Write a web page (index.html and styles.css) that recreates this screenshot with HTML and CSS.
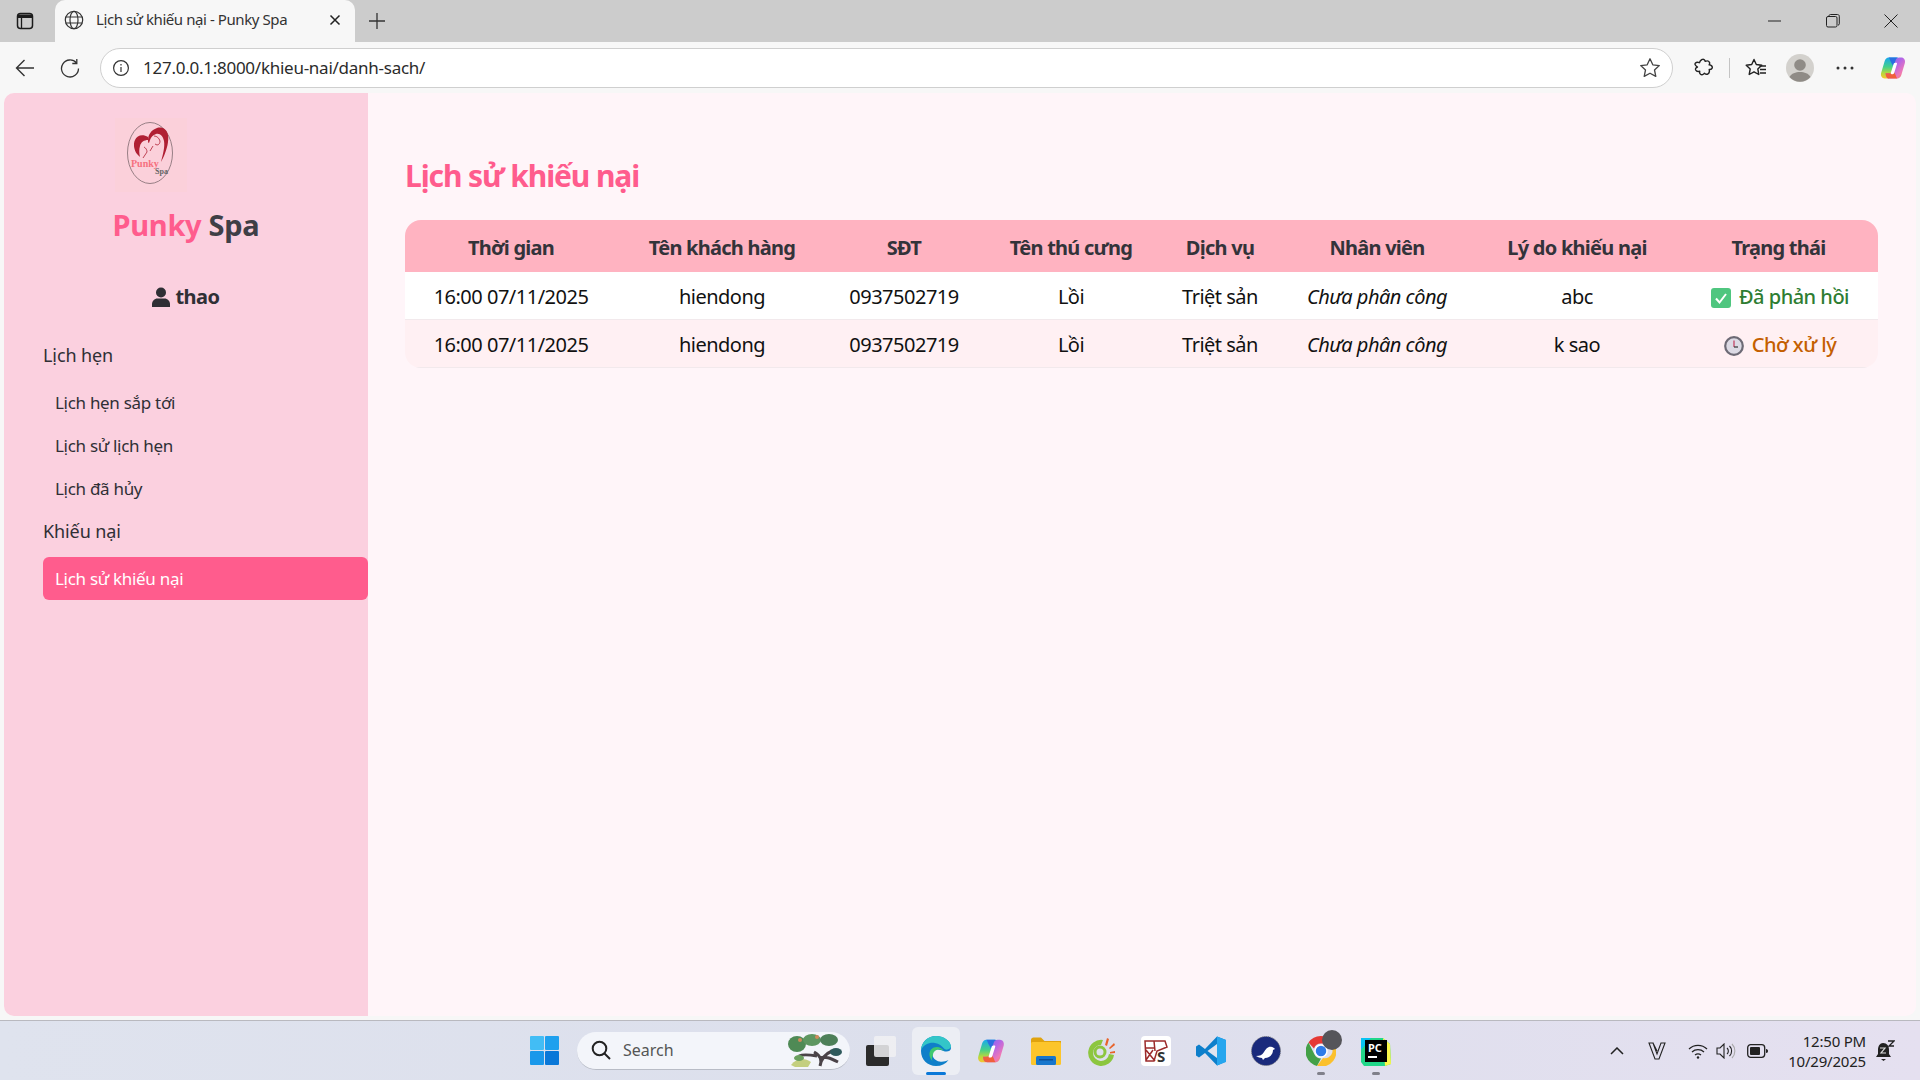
FILE: index.html
```html
<!DOCTYPE html>
<html lang="vi">
<head>
<meta charset="utf-8">
<title>Lịch sử khiếu nại - Punky Spa</title>
<link rel="stylesheet" href="styles.css">
</head>
<body>
<svg class="defs" width="0" height="0" aria-hidden="true">
  <defs>
    <linearGradient id="cpA" x1="0" y1="0" x2="0" y2="1"><stop offset="0" stop-color="#18a8ee"/><stop offset=".45" stop-color="#45d08a"/><stop offset=".75" stop-color="#b8d83c"/><stop offset="1" stop-color="#f8c62e"/></linearGradient>
    <linearGradient id="cpB" x1="0" y1="0" x2="1" y2="1"><stop offset="0" stop-color="#5a78ee"/><stop offset=".45" stop-color="#b565e6"/><stop offset=".75" stop-color="#ee79b8"/><stop offset="1" stop-color="#f6824a"/></linearGradient>
    <symbol id="copilot" viewBox="0 0 32 32">
      <path d="M11 4h9c2 0 3.500 1.200 4 3l.5 3h-4c-2 0-3 1-3.500 3l-3.500 12c-.7 2-2.200 3-4 3H6.500C3.500 28 1.500 25 2.500 21.500L6.500 8C7.300 5.500 9 4 11 4z" fill="url(#cpA)"/>
      <path d="M11 4h9c2 0 3.500 1.200 4 3l.5 3h-4c-2 0-3 1-3.500 3l-.5 1.500L13 8c-.5-1.500-1-3-2-4z" fill="#2a6fe0"/>
      <path d="M21 28h-9c-2 0-3.500-1.200-4-3l-.5-3h4c2 0 3-1 3.500-3L19 7c.7-2 2.200-3 4-3h2.500c3 0 5 3 4 6.500L25.500 24c-.8 2.500-2.500 4-4.500 4z" fill="url(#cpB)"/>
      <path d="M21 28h-9c-2 0-3.500-1.200-4-3l-.5-3h4c2 0 3-1 3.500-3l.5-1.500L19 24c.5 1.500 1 3 2 4z" fill="#f0603c"/>
      <path d="M19.500 10h-1c-1 0-1.700.8-2 2l-3 9.500c-.3 1 .2 1.500 1 1.500h1c1 0 1.700-.8 2-2l3-9.500c.3-1-.2-1.500-1-1.500z" fill="#fff"/>
    </symbol>
  </defs>
</svg>

<header class="tabstrip">
  <svg class="sb-toggle" viewBox="0 0 18 18" width="18" height="18"><rect x="1.500" y="1.500" width="15" height="15" rx="3" fill="none" stroke="#1c1c1c" stroke-width="1.500"/><path d="M2 2.500h14V6H2z" fill="#1c1c1c"/><path d="M5.500 6v10" stroke="#1c1c1c" stroke-width="1.300"/></svg>
  <div class="tab">
    <svg class="tab-globe" viewBox="0 0 20 20" width="20" height="20" fill="none" stroke="#333" stroke-width="1.200"><circle cx="10" cy="10" r="8.700"/><ellipse cx="10" cy="10" rx="4" ry="8.700"/><path d="M1.800 7h16.400M1.800 13h16.400"/></svg>
    <span class="tab-title">Lịch sử khiếu nại - Punky Spa</span>
    <svg class="tab-x" viewBox="0 0 12 12" width="12" height="12"><path d="M1.500 1.500l9 9M10.500 1.500l-9 9" stroke="#222" stroke-width="1.500"/></svg>
  </div>
  <svg class="tab-plus" viewBox="0 0 18 18" width="18" height="18"><path d="M9 1v16M1 9h16" stroke="#333" stroke-width="1.300"/></svg>
  <div class="win-ctrl">
    <svg viewBox="0 0 14 14" width="14" height="14"><path d="M0 7h13" stroke="#222" stroke-width="1"/></svg>
    <svg viewBox="0 0 14 14" width="14" height="14" fill="none" stroke="#222" stroke-width="1"><rect x=".5" y="2.500" width="10.500" height="10.500" rx="1.500"/><path d="M3 2.500V2c0-1 .6-1.500 1.500-1.500h7c1 0 1.800.7 1.800 1.800v7.500c0 .8-.5 1.300-1.300 1.400"/></svg>
    <svg viewBox="0 0 14 14" width="14" height="14"><path d="M.5.500l13 13M13.500.500l-13 13" stroke="#222" stroke-width="1"/></svg>
  </div>
</header>

<div class="toolbar">
  <svg class="tb-back" viewBox="0 0 20 20" width="20" height="20" fill="none" stroke="#333" stroke-width="1.400"><path d="M19 10H1.500M9.500 2L1.500 10l8 8"/></svg>
  <svg class="tb-reload" viewBox="0 0 20 20" width="20" height="20" fill="none" stroke="#333" stroke-width="1.300"><path d="M16.500 5A8.500 8.500 0 1 0 18.500 10.500"/><path d="M16.800 1v4.500h-4.500"/></svg>
  <div class="address">
    <svg class="info" viewBox="0 0 18 18" width="18" height="18" fill="none" stroke="#333" stroke-width="1.200"><circle cx="9" cy="9" r="7.400"/><path d="M9 8v5M9 5v1.400"/></svg>
    <span class="url">127.0.0.1:8000/khieu-nai/danh-sach/</span>
    <svg class="star" viewBox="0 0 22 22" width="22" height="22" fill="none" stroke="#444" stroke-width="1.300" stroke-linejoin="round"><path d="M11 1.800l2.800 6 6.500.8-4.800 4.400 1.300 6.400-5.800-3.200-5.800 3.200 1.300-6.400L1.700 8.600l6.500-.8z"/></svg>
  </div>
  <div class="tb-right">
    <svg class="tb-ext" viewBox="0 0 20 20" width="20" height="20" fill="none" stroke="#222" stroke-width="1.400" stroke-linejoin="round"><path d="M8 1.500c1.500-.8 3 .3 3.200 1.800 1.600-.6 3.600-.3 4.300 1 .5 1-.2 2-.3 2.500 2 .3 3.500 1.500 3 3.200-.4 1.400-1.800 1.600-3 1.500.4 1.600.2 3.500-1.200 4.400-1.300.8-2.500.3-3.500-.7-1 1.400-2.700 2.100-4 1.100-1-.7-1-2-.8-3-1.500.4-3.400 0-4-1.300-.6-1.400.5-2.500 1.800-3C1 7.500.5 6 1.500 5c1-1 2.800-.8 4-.3.300-1.200 1.300-2.600 2.500-3.200z"/></svg>
    <span class="tb-div"></span>
    <svg class="tb-fav" viewBox="0 0 22 20" width="22" height="20" fill="none" stroke="#222" stroke-width="1.400" stroke-linejoin="round"><path d="M9 1.500l2.300 5 5.500.7-4 3.800 1 5.500L9 13.800l-4.800 2.700 1-5.500-4-3.800 5.500-.7z"/><path d="M14.500 8H21M15 11.500h6M15 15h6"/></svg>
    <svg class="tb-avatar" viewBox="0 0 28 28" width="28" height="28"><circle cx="14" cy="14" r="14" fill="#d3d1cd"/><circle cx="14" cy="11" r="5.800" fill="#8f8b86"/><path d="M3.500 23c2-3.600 6-5 10.500-5s8.500 1.400 10.500 5A14 14 0 0 1 3.500 23z" fill="#8f8b86"/></svg>
    <svg class="tb-dots" viewBox="0 0 18 4" width="18" height="4" fill="#333"><circle cx="2" cy="2" r="1.500"/><circle cx="9" cy="2" r="1.500"/><circle cx="16" cy="2" r="1.500"/></svg>
    <svg class="tb-copilot" width="28" height="28"><use href="#copilot"/></svg>
  </div>
</div>

<div class="window">
  <aside class="sidebar">
    <div class="logo">
      <svg viewBox="0 0 72 74" width="72" height="74">
        <rect width="72" height="74" fill="#fbd0da"/>
        <ellipse cx="35" cy="35" rx="22.500" ry="30.500" fill="none" stroke="#7d6a6f" stroke-width=".8"/>
        <path d="M33 22c0-5 3-10 9-12 5-1.500 10 1 11 7 1 6-1 14-4 21l-3 6c2-8 4-15 3-21-1-5-4-8-8-7-3 1-5 3-6 6l-1 3c-1 0-1-2-1-3z" fill="#b01f33"/>
        <path d="M33 19c-5-3-11-2-13 3-2 4-1 10 2 14l3 3c-1-4-1-8 0-11 1-4 4-6 8-6z" fill="#b01f33"/>
        <path d="M29 29c2 1 3 3 3 5l-4 6M39 18c3 0 5 2 6 5 0 2-1 4-3 4l-2-1M35 33l3-5" fill="none" stroke="#b01f33" stroke-width=".8"/>
        <text class="logo-p" x="16" y="49">Punky</text>
        <text class="logo-s" x="40" y="56">Spa</text>
      </svg>
    </div>
    <h2 class="brand"><span class="brand-a">Punky</span> Spa</h2>
    <div class="user">
      <svg viewBox="0 0 18 20" width="18" height="20" fill="#2f2f35"><circle cx="9" cy="5.500" r="5"/><path d="M0 20v-3c0-3 2.500-5.500 5.500-5.500h7c3 0 5.500 2.500 5.500 5.500v3z"/></svg>
      <span>thao</span>
    </div>
    <nav class="nav">
      <div class="nav-group">Lịch hẹn</div>
      <a class="nav-item">Lịch hẹn sắp tới</a>
      <a class="nav-item">Lịch sử lịch hẹn</a>
      <a class="nav-item">Lịch đã hủy</a>
      <div class="nav-group nav-group-2">Khiếu nại</div>
      <a class="nav-item active">Lịch sử khiếu nại</a>
    </nav>
  </aside>
  <main class="main">
    <h1 class="title">Lịch sử khiếu nại</h1>
    <div class="table-wrap">
      <table class="table">
        <colgroup>
          <col class="c1"><col class="c2"><col class="c3"><col class="c4"><col class="c5"><col class="c6"><col class="c7"><col class="c8">
        </colgroup>
        <thead>
          <tr><th>Thời gian</th><th>Tên khách hàng</th><th>SĐT</th><th>Tên thú cưng</th><th>Dịch vụ</th><th>Nhân viên</th><th>Lý do khiếu nại</th><th>Trạng thái</th></tr>
        </thead>
        <tbody>
          <tr>
            <td>16:00 07/11/2025</td><td>hiendong</td><td>0937502719</td><td>Lồi</td><td>Triệt sản</td><td class="em">Chưa phân công</td><td>abc</td>
            <td class="st st-ok"><svg viewBox="0 0 20 20" width="20" height="20"><rect width="20" height="20" rx="3" fill="#4fc67f"/><path d="M5 10.500l3.500 4L15 6" fill="none" stroke="#fff" stroke-width="2"/></svg><span>Đã phản hồi</span></td>
          </tr>
          <tr>
            <td>16:00 07/11/2025</td><td>hiendong</td><td>0937502719</td><td>Lồi</td><td>Triệt sản</td><td class="em">Chưa phân công</td><td>k sao</td>
            <td class="st st-wait"><svg viewBox="0 0 20 20" width="20" height="20"><circle cx="10" cy="10" r="8.800" fill="#dcdae4" stroke="#6d6a75" stroke-width="2.200"/><path d="M10 4.500V11" stroke="#c2395c" stroke-width="1.200"/><path d="M10 11h4" stroke="#333" stroke-width="1.200"/></svg><span>Chờ xử lý</span></td>
          </tr>
        </tbody>
      </table>
    </div>
  </main>
</div>

<footer class="taskbar">
  <div class="task-center">
    <svg class="t-win" viewBox="0 0 29 29" width="29" height="29"><g fill="#1b93e8"><rect width="14" height="14" rx="1" fill="#42bdf5"/><rect x="15" width="14" height="14" rx="1" fill="#1ea0ee"/><rect y="15" width="14" height="14" rx="1" fill="#1a98ea"/><rect x="15" y="15" width="14" height="14" rx="1" fill="#0a78d8"/></g></svg>
    <div class="search">
      <svg viewBox="0 0 20 20" width="20" height="20" fill="none" stroke="#222" stroke-width="2"><circle cx="8.500" cy="8.500" r="6.800"/><path d="M13.500 13.500l5.500 5.500"/></svg>
      <span>Search</span>
      <svg class="tree" viewBox="0 0 55 36" width="55" height="36">
        <path d="M4 33c6-8 14-7 20-3l-3 5H8z" fill="#c4cf7f"/>
        <path d="M33 34c2-6 1-10-6-14M33 34c1-7 5-12 12-15M33 26c5-2 10 0 18 4M30 24c-6-1-14-2-18 0" stroke="#4a4348" stroke-width="3" fill="none"/>
        <ellipse cx="10" cy="12" rx="9" ry="8" fill="#4f8a55"/><ellipse cx="25" cy="8" rx="9" ry="6" fill="#5d9660"/><ellipse cx="42" cy="8" rx="9" ry="6" fill="#4d7f58"/><ellipse cx="49" cy="20" rx="6" ry="4" fill="#2f5a5c"/><ellipse cx="12" cy="26" rx="5" ry="3" fill="#6aa05e"/><circle cx="30" cy="5" r="2" fill="#d08a5a"/><circle cx="13" cy="8" r="2" fill="#d08a5a"/>
      </svg>
    </div>
    <svg class="t-view" viewBox="0 0 30 30" width="30" height="30"><rect x="0" y="9" width="23" height="21" rx="2" fill="#2b2b2b"/><rect x="8" y="0" width="22" height="21" rx="2" fill="#f1f1f3" fill-opacity=".85"/></svg>
    <div class="t-active">
      <svg viewBox="0 0 32 32" width="32" height="32"><path d="M16 1C7.500 1 1 7.500 1 16c0 8.500 6.500 15 15 15 5.500 0 9.500-2 12.500-6-3 1.500-6 2-9 1.500-4-.7-7-3.500-7-7.500 0-2 1-4 4-4.500 2.500-.4 5 .6 7 1.500 3 1.200 7.500.5 7.500-3C31 6 24 1 16 1z" fill="#0f7fc9"/><path d="M16 1C8 1 1.500 7 1 15c3-6 9-8 14-7 4 .7 7 3 9 5.500.8 1 2 1.400 3.500 1 2-.5 3.500-1.500 3.500-3.500C30.500 6 24 1 16 1z" fill="#33c6c8"/><path d="M13 20c0-3 2.500-5.500 6-5.500 2 0 4 .6 5 1.500-2-4-9-6-13-1.500-2.500 3-2 8.500 1.500 11.500-1-2-.5-3.500.5-6z" fill="#3ec96f"/></svg>
      <i class="t-bar"></i>
    </div>
    <svg class="t-ic t-first" width="30" height="30"><use href="#copilot"/></svg>
    <svg class="t-ic" viewBox="0 0 30 28" width="30" height="28"><path d="M0 3c0-1.500 1-2.500 2.500-2.500H10l3.500 3.500H30v4H0z" fill="#e0a30e"/><rect y="5" width="30" height="23" rx="1.500" fill="#fcc52b"/><rect x="5" y="19" width="20" height="9" rx="1.500" fill="#1776cc"/><rect x="8" y="22" width="14" height="1.500" fill="#0d4f96"/></svg>
    <svg class="t-ic" viewBox="0 0 30 30" width="30" height="30"><path d="M17 4A13 13 0 1 0 28 19l-5-1a8 8 0 1 1-8-9z" fill="#8cc63f"/><circle cx="14" cy="16" r="5" fill="none" stroke="#8cc63f" stroke-width="3"/><path d="M19 9l2-7 2 1-2 7zM23 12l5-5 1 2-5 4zM24 16l5-1v2l-5 .5z" fill="#e8632a"/></svg>
    <div class="t-ks"><svg class="ks-svg" viewBox="0 0 30 30" width="30" height="30"><rect width="30" height="30" rx="4" fill="#fff"/><path d="M4 5h20l2 6-10 4-3 10H5zM4 12h10M13 5l1 10M5 14l9 11M12 14L5 24" fill="none" stroke="#9c2b2b" stroke-width="1.500"/><text class="ks-s" x="16" y="26">S</text></svg></div>
    <svg class="t-ic" viewBox="0 0 30 30" width="30" height="30"><path d="M21 .5L9 13 3 8.500 0 10.500v9l3 2 6-4.500 12 12.500 9-4V4z" fill="#0d7fcb"/><path d="M21 .5l9 3.500v22l-9 3.500z" fill="#26a6ee"/><path d="M21 8L11.500 15 21 22z" fill="#e0e4ef"/></svg>
    <svg class="t-ic" viewBox="0 0 30 30" width="30" height="30"><circle cx="15" cy="15" r="14.500" fill="#1a2a7c" stroke="#777" stroke-dasharray="1 1"/><path d="M5 20c4 0 6-1 8-4 2-3 4-6 8-5 1 0 2 1 3 2l-2 1c0 5-4 8-8 8l-2 2-1-2c-2 0-4-1-6-2z" fill="#fff"/></svg>
    <div class="t-chrome">
      <svg viewBox="0 0 30 30" width="30" height="30"><path d="M15 0a15 15 0 0 1 13 7.500H15a7.500 7.500 0 0 0-7 5L2.500 6.500A15 15 0 0 1 15 0z" fill="#e53935"/><path d="M2.500 6.500L8.500 18.500a7.500 7.500 0 0 0 6.500 4L11 30A15 15 0 0 1 2.500 6.500z" fill="#43a047"/><path d="M28 7.500A15 15 0 0 1 11 30l6-8a7.500 7.500 0 0 0 4-14.500z" fill="#fbc02d"/><circle cx="15" cy="15" r="6" fill="#2f7be8" stroke="#fff" stroke-width="1.500"/></svg>
      <i class="t-badge"></i>
      <i class="t-dot"></i>
    </div>
    <div class="t-chrome">
      <svg viewBox="0 0 30 30" width="30" height="30"><path d="M0 2h22l7 6 1 20-6 2H3l-3-4z" fill="#21d789"/><path d="M22 2l7 6 1 20-6 2z" fill="#fcf84a"/><path d="M0 2h10L0 14z" fill="#07c3f2"/><rect x="4" y="4" width="22" height="22" fill="#000"/><rect x="7" y="20" width="9" height="2" fill="#fff"/><text class="pc" x="7" y="16">PC</text></svg>
      <i class="t-dot"></i>
    </div>
  </div>
  <div class="tray">
    <svg class="tr-up" viewBox="0 0 14 8" width="14" height="8" fill="none" stroke="#222" stroke-width="1.500"><path d="M1 7l6-6 6 6"/></svg>
    <svg class="tr-v" viewBox="0 0 18 18" width="18" height="18" fill="none" stroke="#222" stroke-width="1.100"><path d="M1 1h4l4 11 4-11h4L11 17H7zM5 1l4 8"/></svg>
    <svg class="tr-wifi" viewBox="0 0 20 16" width="20" height="16" fill="none" stroke="#222" stroke-width="1.300"><path d="M1 6a13 13 0 0 1 18 0M4 9a9 9 0 0 1 12 0M7 12a5 5 0 0 1 6 0"/><circle cx="10" cy="14.500" r="1.200" fill="#222" stroke="none"/></svg>
    <svg class="tr-vol" viewBox="0 0 20 16" width="20" height="16" fill="none" stroke="#222" stroke-width="1.100"><path d="M1 5h3l4-4v14l-4-4H1z"/><path d="M11 5a4 4 0 0 1 0 6M13.500 3a7 7 0 0 1 0 10"/><path d="M16 1a10 10 0 0 1 0 14" stroke="#aaa"/></svg>
    <svg class="tr-bat" viewBox="0 0 21 14" width="21" height="14"><rect x=".7" y=".7" width="17" height="12.600" rx="3" fill="none" stroke="#222" stroke-width="1.300"/><rect x="3" y="3" width="10" height="8" rx="1" fill="#222"/><path d="M19 5c1.500 0 2 1 2 2s-.5 2-2 2z" fill="#222"/></svg>
    <div class="clock"><span>12:50 PM</span><span>10/29/2025</span></div>
    <svg class="tr-bell" viewBox="0 0 20 22" width="20" height="22"><path d="M8 3c4 0 6 3 6 7v4l2 3H1l2-3v-4c0-4 2-7 5-7z" fill="#222"/><path d="M6 19h5l-2.500 2z" fill="#222"/><path d="M5 8h5l-4 5h5" stroke="#ddd" stroke-width="1.200" fill="none"/><path d="M13 1h6l-5 5h5" stroke="#222" stroke-width="1.300" fill="none"/></svg>
  </div>
</footer>
</body>
</html>
```

FILE: styles.css
```css
* { box-sizing: border-box; }
html, body { margin: 0; height: 100%; }
body {
  width: 1920px;
  height: 1080px;
  overflow: hidden;
  display: flex;
  flex-direction: column;
  background: #f7f7f7;
  font-family: "Noto Sans", "Open Sans", sans-serif;
  color: #222;
}
svg { display: block; flex: none; }
.defs { position: absolute; }

.tabstrip {
  height: 42px;
  background: #cccccc;
  display: flex;
  align-items: center;
  padding-left: 16px;
}
.sb-toggle { margin-right: 21px; }
.tab {
  width: 300px;
  height: 42px;
  background: #f7f7f7;
  border-radius: 10px 10px 0 0;
  display: flex;
  align-items: center;
  padding: 0 14px 2px 9px;
}
.tab-globe { margin-right: 12px; }
.tab-title { flex: 1; font-size: 15px; line-height: 20px; margin-top: -2px; letter-spacing: -.42px; white-space: nowrap; color: #333; }
.tab-plus { margin-left: 13px; }
.win-ctrl {
  margin-left: auto;
  display: flex;
  gap: 44px;
  align-items: center;
  padding-right: 22px;
}

.toolbar {
  height: 51px;
  background: #f7f7f7;
  display: flex;
  align-items: center;
  padding: 0 0 0 15px;
}
.tb-reload { margin-left: 25px; }
.address {
  flex: none;
  margin-left: 20px;
  width: 1573px;
  height: 40px;
  background: #fff;
  border: 1px solid #cfcfcf;
  border-radius: 20px;
  display: flex;
  align-items: center;
  padding: 0 11px;
}
.url { margin-left: 13px; flex: 1; font-size: 17px; letter-spacing: -.26px; color: #2b2b2b; }
.tb-right { display: flex; align-items: center; margin-left: 21px; }
.tb-div { width: 1px; height: 20px; background: #c4c4c4; margin: 0 15px; }
.tb-avatar { margin-left: 19px; }
.tb-dots { margin-left: 22px; }
.tb-copilot { margin-left: 25px; }

.window {
  flex: 1;
  display: flex;
  margin: 0 4px;
  min-height: 0;
  background: #fff5f9;
  border-radius: 10px;
  overflow: hidden;
  height: 923px;
}
.sidebar {
  width: 364px;
  background: #fbd0df;
  display: flex;
  flex-direction: column;
  padding-top: 25px;
}
.logo { margin-left: 111px; }
.brand {
  margin: 13px 0 0;
  text-align: center;
  font-size: 29px;
  line-height: 40px;
  font-weight: 700;
  color: #3f3f46;
  letter-spacing: -.3px;
}
.brand-a { color: #ff5c8d; }
.user {
  margin-top: 38px;
  display: flex;
  justify-content: center;
  align-items: center;
  gap: 5px;
  font-size: 20px;
  line-height: 28px;
  font-weight: 700;
  color: #2f2f35;
  letter-spacing: -.5px;
}
.nav { margin: 32px 0 0 39px; display: flex; flex-direction: column; }
.nav-group { font-size: 18px; line-height: 24px; color: #2f2f35; letter-spacing: -.1px; margin-bottom: 14px; }
.nav-group-2 { margin: 0 0 14px; padding-top: 9px; }
.nav-item {
  height: 43px;
  display: flex;
  align-items: center;
  padding-left: 12px;
  font-size: 17px;
  color: #2f2f35;
  letter-spacing: -.3px;
  border-radius: 6px;
}
.nav-item.active { background: #ff5c8d; color: #fff; }

.main { flex: 1; padding: 0 37px; min-width: 0; }
.title {
  margin: 0;
  padding-top: 63px;
  height: 127px;
  font-size: 30px;
  line-height: 40px;
  font-weight: 700;
  color: #ff5c8d;
  letter-spacing: -1.1px;
}
.table-wrap { border-radius: 16px; overflow: hidden; width: 1473px; }
.table { border-collapse: collapse; table-layout: fixed; width: 1473px; text-align: center; }
.c1 { width: 212px; } .c2 { width: 210px; } .c3 { width: 154px; } .c4 { width: 180px; }
.c5 { width: 118px; } .c6 { width: 196px; } .c7 { width: 204px; } .c8 { width: 199px; }
.table th {
  height: 52px;
  padding: 2px 0 0;
  background: #ffb3c1;
  font-size: 20px;
  font-weight: 700;
  color: #33333a;
  letter-spacing: -.75px;
}
.table td {
  height: 48px;
  padding: 2px 0 0;
  font-size: 20px;
  color: #111;
  letter-spacing: -.5px;
  background: #fff;
  border-bottom: 1px solid #f2e9ec;
}
.table tbody tr:nth-child(2) td { background: #fff0f3; }
.table tbody tr:first-child td { height: 47px; }
.table td.em { font-style: italic; }
.st svg { display: inline-block; vertical-align: -4px; margin-right: 8px; }
.table td.st { font-weight: 500; padding-left: 3px; }
.table td.st-ok { color: #2e7d32; }
.table td.st-wait { color: #c45f00; }

.taskbar {
  height: 60px;
  margin-top: 4px;
  background: linear-gradient(90deg, #dfe3ee 0%, #dcdfec 50%, #e5e0f0 100%);
  border-top: 1px solid #b9b9bf;
  display: flex;
  align-items: center;
  position: relative;
}
.task-center { display: flex; align-items: center; margin-left: 530px; }
.search {
  margin-left: 18px;
  width: 273px;
  height: 38px;
  border-radius: 19px;
  background: #f3f5fa;
  border-bottom: 1px solid #b8bcc6;
  display: flex;
  align-items: center;
  padding: 0 8px 0 14px;
  font-size: 16px;
  color: #555;
}
.search span { margin-left: 12px; flex: 1; }
.t-view { margin-left: 16px; }
.t-active {
  margin-left: 16px;
  width: 48px;
  height: 48px;
  background: #eceef4;
  border-radius: 6px;
  display: flex;
  align-items: center;
  justify-content: center;
  position: relative;
}
.t-bar { position: absolute; left: 14px; bottom: 0; width: 20px; height: 3px; border-radius: 2px; background: #0a78d8; }
.t-ic { margin-left: 25px; }
.t-ic.t-first { margin-left: 16px; }
.t-ks, .t-chrome { margin-left: 25px; position: relative; }
.ks-svg { overflow: visible; }
.t-badge { position: absolute; right: -6px; top: -6px; width: 20px; height: 20px; border-radius: 50%; background: #55555a; }
.t-dot { position: absolute; left: 11px; bottom: -9px; width: 8px; height: 3px; border-radius: 2px; background: #80808a; }
.ks-s { font-size: 15px; font-weight: 700; fill: #333; font-family: "Noto Sans", sans-serif; }
.pc { font-size: 11px; font-weight: 700; fill: #fff; font-family: "Noto Sans", sans-serif; }
.logo-p { font-size: 10px; font-weight: 700; fill: #f6707f; font-family: "Liberation Serif", serif; }
.logo-s { font-size: 8px; font-weight: 700; fill: #666; font-family: "Liberation Serif", serif; }

.tray { margin-left: auto; display: flex; align-items: center; padding-right: 25px; }
.tr-v { margin-left: 24px; }
.tr-wifi { margin-left: 22px; }
.tr-vol { margin-left: 8px; }
.tr-bat { margin-left: 11px; }
.clock {
  width: 98px;
  display: flex;
  flex-direction: column;
  align-items: flex-end;
  font-size: 15px;
  line-height: 20px;
  letter-spacing: -.2px;
  color: #222;
}
.tr-bell { margin-left: 9px; }
```
